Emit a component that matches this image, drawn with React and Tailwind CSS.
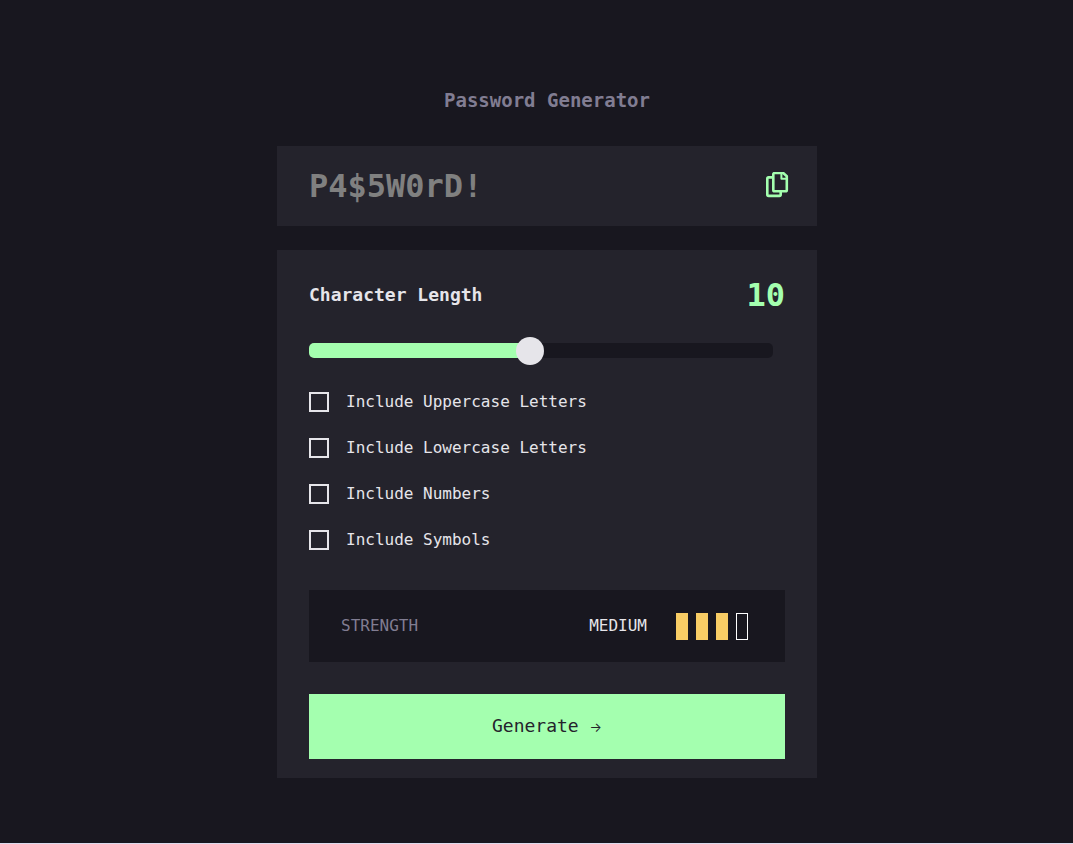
import { useState } from "react";

const OPTIONS = [
  "Include Uppercase Letters",
  "Include Lowercase Letters",
  "Include Numbers",
  "Include Symbols",
];

const MIN = 1;
const MAX = 20;

function CopyIcon() {
  return (
    <svg width="24" height="28" viewBox="0 0 24 28" fill="none" stroke="currentColor" strokeWidth="2.6" strokeLinejoin="round" aria-hidden="true">
      <path d="M7 5.4H3.6A1.3 1.3 0 0 0 2.3 6.7v15.9a1.3 1.3 0 0 0 1.3 1.3h10.8a1.3 1.3 0 0 0 1.3-1.3V20" />
      <path d="M9.6 1h8.6l3.6 3.2v13.7a1.3 1.3 0 0 1-1.3 1.3H9.6a1.3 1.3 0 0 1-1.3-1.3V2.3A1.3 1.3 0 0 1 9.6 1z" />
      <path d="M16.4 1.4v5.4h5.4" strokeWidth="2" />
    </svg>
  );
}

function LengthSlider({ value, onChange }) {
  const percent = ((value - MIN) / (MAX - MIN)) * 100;
  return (
    <input
      id="length"
      type="range"
      min={MIN}
      max={MAX}
      value={value}
      onChange={(e) => onChange(Number(e.target.value))}
      style={{ backgroundSize: `${percent}% 100%` }}
      className="mt-[27px] mr-3 block h-[15px] cursor-pointer appearance-none rounded-[5px] bg-[#18171f] bg-linear-to-r from-[#a4ffaf] to-[#a4ffaf] bg-no-repeat outline-none [&::-webkit-slider-thumb]:h-7 [&::-webkit-slider-thumb]:w-7 [&::-webkit-slider-thumb]:appearance-none [&::-webkit-slider-thumb]:rounded-full [&::-webkit-slider-thumb]:bg-[#e6e5ea]"
    />
  );
}

export default function App() {
  const [length, setLength] = useState(10);

  return (
    <div className="min-h-screen border-b border-[#dcdcee] bg-[#18171f] pb-12 pl-[21px] font-['DejaVu_Sans_Mono',monospace] text-[#e6e5ea]">
      <main className="mx-auto w-full max-w-[540px] pt-[88px]">
        <h1 className="text-center text-[19px] leading-6 font-bold text-[#817d92]">Password Generator</h1>

        <div className="mt-[34px] flex h-20 items-center justify-between bg-[#24232c] pr-7 pl-8">
          <input
            type="text"
            readOnly
            aria-label="Password"
            placeholder="P4$5W0rD!"
            className="min-w-0 flex-1 bg-transparent text-[32px] leading-10 font-bold outline-none placeholder:text-[#808080]"
          />
          <button type="button" aria-label="Copy password" className="cursor-pointer text-[#a4ffaf]">
            <CopyIcon />
          </button>
        </div>

        <section className="mt-6 flex flex-col bg-[#24232c] px-8 pt-6 pb-[19px]">
          <div className="flex items-center justify-between">
            <label htmlFor="length" className="text-[18px] leading-6 font-bold">Character Length</label>
            <output htmlFor="length" className="text-[32px] leading-[42px] font-bold text-[#a4ffaf]">{length}</output>
          </div>

          <LengthSlider value={length} onChange={setLength} />

          <div className="mt-[34px] flex flex-col items-start gap-[26px]">
            {OPTIONS.map((option) => (
              <label key={option} className="flex cursor-pointer items-center gap-[17px] text-[16px] leading-5">
                <input type="checkbox" className="size-5 appearance-none border-2 border-[#e6e5ea] checked:bg-[#a4ffaf]" />
                {option}
              </label>
            ))}
          </div>

          <div className="mt-10 flex h-[72px] items-center bg-[#18171f] pr-[37px] pl-8 text-[16px] leading-5">
            <span className="flex-1 text-[#817d92]">STRENGTH</span>
            <span>MEDIUM</span>
            <div className="ml-[29px] flex gap-2">
              <span className="h-[27px] w-3 bg-[#f8cd65]" />
              <span className="h-[27px] w-3 bg-[#f8cd65]" />
              <span className="h-[27px] w-3 bg-[#f8cd65]" />
              <span className="h-[27px] w-3 border border-white" />
            </div>
          </div>

          <button type="button" className="mt-8 h-[65px] cursor-pointer bg-[#a4ffaf] text-[18px] leading-6 text-[#24232c]">
            Generate <span className="font-['Inter',sans-serif] text-[13px]">→</span>
          </button>
        </section>
      </main>
    </div>
  );
}
